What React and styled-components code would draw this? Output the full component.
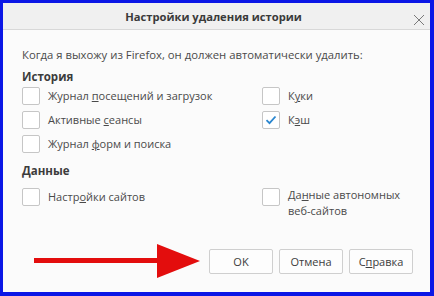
import React from "react";
import styled, { createGlobalStyle } from "styled-components";

const GlobalStyle = createGlobalStyle`
  html, body {
    margin: 0;
    padding: 0;
    background: #ffffff;
  }
  body {
    font-family: "Open Sans", "Noto Sans", sans-serif;
  }
`;

const Frame = styled.div`
  width: 434px;
  height: 296px;
  box-sizing: border-box;
  border: 3px solid #0b17e6;
  border-right-width: 4px;
  border-bottom-width: 4px;
  background: #fbfbfb;
  display: flex;
  flex-direction: column;
`;

const Header = styled.div`
  height: 26px;
  flex: none;
  background: #f0f0f0;
  border-bottom: 1px solid #d8d8d8;
  display: flex;
  align-items: center;
  justify-content: center;
  position: relative;
`;

const Title = styled.div`
  font-size: 11.2px;
  font-weight: 700;
  color: #3a3a3a;
  margin-left: -6px;
`;

const Close = styled.div`
  position: absolute;
  right: 5px;
  top: 6px;
  width: 12px;
  height: 12px;
`;

const Body = styled.div`
  flex: 1;
  display: flex;
  flex-direction: column;
  padding: 0 17px 14px 19px;
  color: #4a4a4a;
  font-size: 11px;
`;

const Intro = styled.div`
  margin-top: 18px;
  line-height: 14px;
  font-size: 11.3px;
`;

const SectionTitle = styled.div`
  margin-top: ${(p) => p.$top}px;
  font-weight: 700;
  color: #3c3c3c;
  line-height: 14px;
  font-size: 11.5px;
`;

const Grid = styled.div`
  margin-top: ${(p) => p.$top}px;
  display: grid;
  grid-template-columns: 240px 1fr;
  align-items: start;
  row-gap: 6px;
`;

const Row = styled.label`
  display: flex;
  align-items: ${(p) => (p.$multi ? "flex-start" : "center")};
  gap: 8px;
  line-height: 16px;
`;

const Text = styled.span`
  margin-top: ${(p) => (p.$multi ? "-1px" : "0")};
`;

const Box = styled.span`
  width: 18px;
  height: 18px;
  flex: none;
  box-sizing: border-box;
  border: 1px solid #c6c6c6;
  border-radius: 2px;
  background: #ffffff;
  display: flex;
  align-items: center;
  justify-content: center;
`;

const Footer = styled.div`
  margin-top: auto;
  display: flex;
  align-items: center;
  justify-content: flex-end;
  gap: 6px;
`;

const Arrow = styled.svg`
  margin-right: 3px;
  flex: none;
`;

const Button = styled.button`
  width: 64px;
  height: 25px;
  box-sizing: border-box;
  border: 1px solid #cfcfcf;
  border-radius: 2px;
  background: #fdfdfd;
  font-family: inherit;
  font-size: 11px;
  color: #3c3c3c;
  padding: 0;
`;

const Check = () => (
  <svg width="12" height="10" viewBox="0 0 12 10">
    <path d="M1.5 5.2 L4.5 8.2 L10.5 1.5" fill="none" stroke="#2a86cf" strokeWidth="1.8" />
  </svg>
);

const Item = ({ checked, multi, children }) => (
  <Row $multi={multi}>
    <Box>{checked && <Check />}</Box>
    <Text $multi={multi}>{children}</Text>
  </Row>
);

export default function App() {
  return (
    <>
      <GlobalStyle />
      <Frame>
        <Header>
          <Title>Настройки удаления истории</Title>
          <Close>
            <svg width="12" height="12" viewBox="0 0 12 12">
              <path d="M1 1 L11 11 M11 1 L1 11" stroke="#7a7a7a" strokeWidth="1" />
            </svg>
          </Close>
        </Header>
        <Body>
          <Intro>Когда я выхожу из Firefox, он должен автоматически удалить:</Intro>
          <SectionTitle $top={8}>История</SectionTitle>
          <Grid $top={3}>
            <Item>
              Журнал <u>п</u>осещений и загрузок
            </Item>
            <Item>
              К<u>у</u>ки
            </Item>
            <Item>
              Активные <u>с</u>еансы
            </Item>
            <Item checked>
              К<u>э</u>ш
            </Item>
            <Item>
              Журнал <u>ф</u>орм и поиска
            </Item>
          </Grid>
          <SectionTitle $top={11}>Данные</SectionTitle>
          <Grid $top={10}>
            <Item>
              Настр<u>о</u>йки сайтов
            </Item>
            <Item multi>
              Да<u>н</u>ные автономных
              <br />
              веб-сайтов
            </Item>
          </Grid>
          <Footer>
            <Arrow width="166" height="34" viewBox="0 0 166 34">
              <rect x="0" y="14" width="126" height="5" fill="#e30d0d" />
              <polygon points="123,0 166,17 123,34" fill="#e30d0d" />
            </Arrow>
            <Button>OK</Button>
            <Button>Отмена</Button>
            <Button>
              С<u>п</u>равка
            </Button>
          </Footer>
        </Body>
      </Frame>
    </>
  );
}
